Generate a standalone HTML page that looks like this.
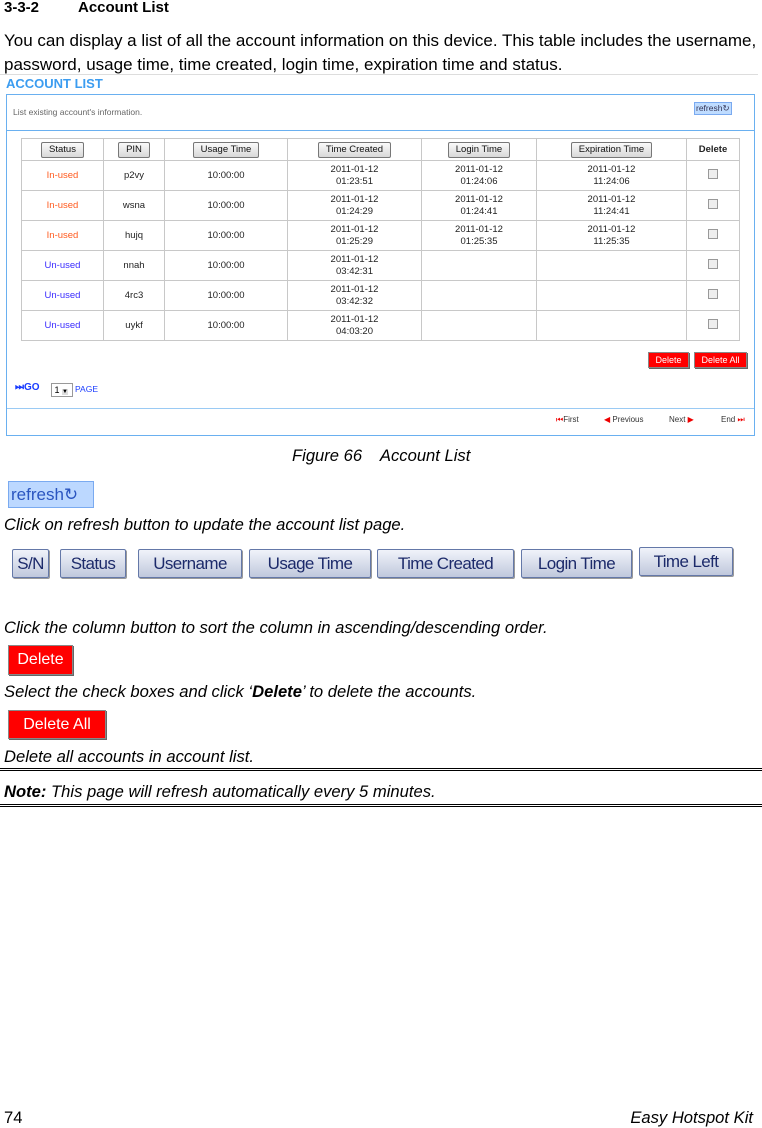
<!DOCTYPE html>
<html><head><meta charset="utf-8"><style>
body{margin:0;width:762px;height:1127px;position:relative;background:#fff;font-family:"Liberation Sans",Arial,sans-serif;color:#000;overflow:hidden}
.a{position:absolute;white-space:nowrap}
.p{font-size:16.6px}
.i{font-style:italic}
.box{position:absolute;left:6px;top:94px;width:747px;height:340px;border:1px solid #6ab0f0}
table{position:absolute;left:21px;top:138px;border-collapse:collapse;font-size:9.5px;color:#222}
td{border:1px solid #c8c8c8;text-align:center;padding:0;line-height:12px}
.b{display:inline-block;border:1px solid #777;border-radius:2px;background:linear-gradient(#fafafa,#d8d8d8);padding:1px 7px;font-size:9.5px;color:#111}
.r{color:#ff5a1e}.u{color:#3a2cff}
.cb{display:inline-block;width:8px;height:8px;border:1px solid #999;background:#eee}
.red{position:absolute;background:#f00;color:#fff;border:1px solid #888;box-shadow:1px 1px 0 #666;text-align:center}
.bb{position:absolute;top:549px;height:27px;border:1px solid #6478a8;border-radius:2px;background:linear-gradient(#f0f3fa,#c0c8dc);font-size:17px;color:#1c2a6a;text-align:center;line-height:27px;box-shadow:1px 1px 0 #999;letter-spacing:-0.6px}
.dl{position:absolute;left:0;width:762px;height:1px;border-top:1px solid #000;border-bottom:1px solid #000}
</style></head><body>
<div class="a" style="left:4px;top:-1px;font-size:15px;font-weight:bold">3-3-2</div>
<div class="a" style="left:78px;top:-1px;font-size:15px;font-weight:bold">Account List</div>
<div class="a" style="left:4px;top:31px;font-size:17px">You can display a list of all the account information on this device. This table includes the username,</div>
<div class="a" style="left:4px;top:55px;font-size:17px">password, usage time, time created, login time, expiration time and status.</div>
<div class="a" style="left:0;top:74px;width:758px;border-top:1px solid #ddd"></div>
<div class="a" style="left:6px;top:76px;font-size:13px;font-weight:bold;color:#3b9cf0">ACCOUNT LIST</div>
<div class="box"></div>
<div class="a" style="left:7px;top:130px;width:747px;border-top:1px solid #6ab0f0"></div>
<div class="a" style="left:7px;top:408px;width:747px;border-top:1px solid #9acaf4"></div>
<div class="a" style="left:13px;top:107px;font-size:8.5px;color:#666">List existing account's information.</div>
<div class="a" style="left:694px;top:102px;font-size:8.5px;color:#335;background:#bfdcff;border:1px solid #7aaaf0;padding:0 1px">refresh&#x21bb;</div>
<table>
<tr style="height:22px"><td style="width:81px"><span class="b">Status</span></td><td style="width:60px"><span class="b">PIN</span></td><td style="width:122px"><span class="b">Usage Time</span></td><td style="width:133px"><span class="b">Time Created</span></td><td style="width:114px"><span class="b">Login Time</span></td><td style="width:149px"><span class="b">Expiration Time</span></td><td style="width:52px;font-weight:bold">Delete</td></tr>
<tr style="height:30px"><td class="r">In-used</td><td>p2vy</td><td>10:00:00</td><td>2011-01-12<br>01:23:51</td><td>2011-01-12<br>01:24:06</td><td>2011-01-12<br>11:24:06</td><td><span class="cb"></span></td></tr>
<tr style="height:30px"><td class="r">In-used</td><td>wsna</td><td>10:00:00</td><td>2011-01-12<br>01:24:29</td><td>2011-01-12<br>01:24:41</td><td>2011-01-12<br>11:24:41</td><td><span class="cb"></span></td></tr>
<tr style="height:30px"><td class="r">In-used</td><td>hujq</td><td>10:00:00</td><td>2011-01-12<br>01:25:29</td><td>2011-01-12<br>01:25:35</td><td>2011-01-12<br>11:25:35</td><td><span class="cb"></span></td></tr>
<tr style="height:30px"><td class="u">Un-used</td><td>nnah</td><td>10:00:00</td><td>2011-01-12<br>03:42:31</td><td></td><td></td><td><span class="cb"></span></td></tr>
<tr style="height:30px"><td class="u">Un-used</td><td>4rc3</td><td>10:00:00</td><td>2011-01-12<br>03:42:32</td><td></td><td></td><td><span class="cb"></span></td></tr>
<tr style="height:30px"><td class="u">Un-used</td><td>uykf</td><td>10:00:00</td><td>2011-01-12<br>04:03:20</td><td></td><td></td><td><span class="cb"></span></td></tr>
</table>
<div class="red" style="left:648px;top:352px;width:39px;height:14px;font-size:9px;line-height:14px">Delete</div>
<div class="red" style="left:694px;top:352px;width:51px;height:14px;font-size:9px;line-height:14px">Delete All</div>
<div class="a" style="left:15px;top:382px;font-size:10px;font-weight:bold;color:#1a3cff">&#x23ED;GO</div>
<div class="a" style="left:51px;top:383px;width:20px;height:12px;border:1px solid #999;font-size:9px;line-height:12px">&nbsp;1 <span style="font-size:6px;background:#ddd">&#9660;</span></div>
<div class="a" style="left:75px;top:384px;font-size:8.5px;color:#1a3cff">PAGE</div>
<div class="a" style="left:556px;top:415px;font-size:8px;color:#333"><span style="color:#e00">&#x23EE;</span>First</div>
<div class="a" style="left:604px;top:415px;font-size:8px;color:#333"><span style="color:#e00">&#9664;</span> Previous</div>
<div class="a" style="left:669px;top:415px;font-size:8px;color:#333">Next <span style="color:#e00">&#9654;</span></div>
<div class="a" style="left:721px;top:415px;font-size:8px;color:#333">End <span style="color:#e00">&#x23ED;</span></div>
<div class="a p i" style="left:292px;top:446px">Figure 66&nbsp;&nbsp;&nbsp; Account List</div>
<div class="a" style="left:8px;top:481px;width:82px;height:25px;background:#bcd8ff;border:1px solid #7aaaf0;font-size:17px;color:#2a55c0;line-height:25px;padding-left:2px">refresh&#x21bb;</div>
<div class="a p i" style="left:4px;top:515px">Click on refresh button to update the account list page.</div>
<div class="bb" style="left:12px;width:35px">S/N</div>
<div class="bb" style="left:60px;width:64px">Status</div>
<div class="bb" style="left:138px;width:102px">Username</div>
<div class="bb" style="left:249px;width:120px">Usage Time</div>
<div class="bb" style="left:377px;width:135px">Time Created</div>
<div class="bb" style="left:521px;width:109px">Login Time</div>
<div class="bb" style="left:639px;top:547px;width:92px">Time Left</div>
<div class="a p i" style="left:4px;top:618px">Click the column button to sort the column in ascending/descending order.</div>
<div class="red" style="left:8px;top:645px;width:63px;height:28px;font-size:16px;line-height:28px">Delete</div>
<div class="a p i" style="left:4px;top:682px">Select the check boxes and click ‘<b>Delete</b>’ to delete the accounts.</div>
<div class="red" style="left:8px;top:710px;width:96px;height:27px;font-size:16px;line-height:27px">Delete All</div>
<div class="a p i" style="left:4px;top:747px">Delete all accounts in account list.</div>
<div class="dl" style="top:768px"></div>
<div class="a p i" style="left:4px;top:782px"><b>Note:</b> This page will refresh automatically every 5 minutes.</div>
<div class="dl" style="top:804px"></div>
<div class="a p" style="left:4px;top:1108px">74</div>
<div class="a p i" style="right:9px;top:1108px">Easy Hotspot Kit</div>
</body></html>
